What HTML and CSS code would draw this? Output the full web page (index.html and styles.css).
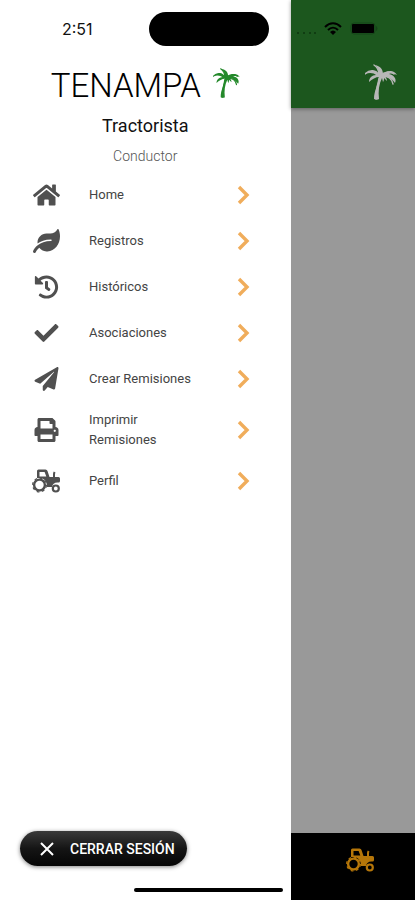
FILE: index.html
```html
<!DOCTYPE html>
<html lang="es">
<head>
    <meta charset="UTF-8">
    <meta name="viewport" content="width=device-width, initial-scale=1.0">
    <title>Tenampa</title>
    <link rel="stylesheet" href="styles.css">
</head>
<body>
    <!-- Shared icons -->
    <svg class="sprite" aria-hidden="true">
        <symbol id="chevron" viewBox="0 0 14 20">
            <path d="M2 2l8 8-8 8" fill="none" stroke="currentColor" stroke-width="3.4"/>
        </symbol>
        <symbol id="palm" viewBox="0 0 32 36">
            <path d="M14 11C11 6 5 5 0 10c5-2 9-1 11 1-4 0-7 3-7 7 3-3 7-5 10-5-1 8-5 14-5 22 2 1 4 1 5 0-1-8 0-15 3-21l1 4c1-1 1-3 1-4l3 3c0-2-1-3-2-5 4 1 7 3 10 7 2-4-1-8-6-9 3-1 6 0 8 1-3-5-9-5-14-1 0-5-3-8-8-9 3 3 4 6 4 10z"/>
            <path d="M14 11C11 6 5 5 0 10M14 11c0-5-2-8-5-10M15 12c5-5 11-5 14-2M17 12c6 0 10 3 11 8M14 14c-1 7-4 14-3 21" fill="none" stroke="currentColor" stroke-width="1.4" stroke-linecap="round"/>
        </symbol>
        <symbol id="tractor" viewBox="0 0 29 24">
            <path fill-rule="evenodd" d="M5 9V2q0-1.500 1.500-1.500h7q1.500 0 2 1.500l2 6h3.500V5q0-1.500.8-2.500l1.700 1Q23 4.500 23 5.500V8h3.500Q28 8 28 9.500V12q0 1.500-1.500 1.500h-1a5.500 5.500 0 0 0-5.500 4.500h-5q0-9-8-9zM7.500 3v4.500h6.800L12.600 3z"/>
            <circle cx="7.500" cy="16" r="5.400" fill="none" stroke="currentColor" stroke-width="2.400"/>
            <circle cx="7.500" cy="16" r="6.900" fill="none" stroke="currentColor" stroke-width="1.200" stroke-dasharray="2.710 2.710"/>
            <circle cx="23.800" cy="19.500" r="3" fill="none" stroke="currentColor" stroke-width="2.200"/>
        </symbol>
    </svg>

    <div class="app">
        <aside class="drawer">
            <div class="status-bar">
                <span class="time">2:51</span>
                <span class="island"></span>
            </div>

            <header class="profile">
                <h1>TENAMPA <svg class="brand-palm" viewBox="0 0 32 36"><use href="#palm"/></svg></h1>
                <h2>Tractorista</h2>
                <p>Conductor</p>
            </header>

            <nav class="menu">
                <a href="#home">
                    <svg class="icon" viewBox="0 0 576 512"><path d="M280.37 148.26L96 300.11V464a16 16 0 0 0 16 16l112.06-.29a16 16 0 0 0 15.92-16V368a16 16 0 0 1 16-16h64a16 16 0 0 1 16 16v95.64a16 16 0 0 0 16 16.05L464 480a16 16 0 0 0 16-16V300L295.67 148.26a12.19 12.19 0 0 0-15.3 0zM571.6 251.47L488 182.56V44.05a12 12 0 0 0-12-12h-56a12 12 0 0 0-12 12v72.61L318.47 43a48 48 0 0 0-61 0L4.34 251.47a12 12 0 0 0-1.6 16.9l25.5 31A12 12 0 0 0 45.15 301l235.22-193.74a12.19 12.19 0 0 1 15.3 0L530.9 301a12 12 0 0 0 16.9-1.6l25.5-31a12 12 0 0 0-1.7-16.93z"/></svg>
                    <span>Home</span>
                    <svg class="chevron"><use href="#chevron"/></svg>
                </a>
                <a href="#registros">
                    <svg class="icon" viewBox="0 0 576 512"><path d="M546.2 9.7c-5.6-12.5-21.6-13-28.3-1.2C486.9 62.4 431.4 96 368 96h-80C182 96 96 182 96 288c0 7 .8 13.7 1.5 20.5C161.3 262.8 253.4 224 384 224c8.8 0 16 7.2 16 16s-7.2 16-16 16C132.6 256 26 410.1 2.4 468c-6.6 16.3 1.2 34.9 17.5 41.6 16.4 6.8 35-1.1 41.8-17.3 1.5-3.6 20.9-47.9 71.9-90.6 32.4 43.9 94 85.8 174.9 77.2C465.5 467.5 576 326.7 576 154.3c0-50.2-10.8-102.2-29.8-144.6z"/></svg>
                    <span>Registros</span>
                    <svg class="chevron"><use href="#chevron"/></svg>
                </a>
                <a href="#historicos">
                    <svg class="icon" viewBox="0 0 512 512"><path d="M504 255.531c.253 136.64-111.18 248.372-247.82 248.468-59.015.042-113.223-20.53-155.822-54.911-11.077-8.94-11.905-25.541-1.839-35.607l11.267-11.267c8.609-8.609 22.353-9.551 31.891-1.984C173.062 425.135 212.781 440 256 440c101.705 0 184-82.311 184-184 0-101.705-82.311-184-184-184-48.814 0-93.149 18.969-126.068 49.932l50.754 50.754c10.08 10.08 2.941 27.314-11.313 27.314H24c-8.837 0-16-7.163-16-16V38.627c0-14.254 17.234-21.393 27.314-11.314l49.372 49.372C129.209 34.136 189.552 8 256 8c136.81 0 247.747 110.78 248 247.531zm-180.912 78.784l9.823-12.63c8.138-10.463 6.253-25.542-4.21-33.679L288 256.349V152c0-13.255-10.745-24-24-24h-16c-13.255 0-24 10.745-24 24v135.651l65.409 50.874c10.463 8.137 25.541 6.253 33.679-4.21z"/></svg>
                    <span>Históricos</span>
                    <svg class="chevron"><use href="#chevron"/></svg>
                </a>
                <a href="#asociaciones">
                    <svg class="icon" viewBox="0 0 512 512"><path d="M173.898 439.404l-166.4-166.4c-9.997-9.997-9.997-26.206 0-36.204l36.203-36.204c9.997-9.998 26.207-9.998 36.204 0L192 312.69 432.095 72.596c9.997-9.997 26.207-9.997 36.204 0l36.203 36.204c9.997 9.997 9.997 26.206 0 36.204l-294.4 294.401c-9.998 9.997-26.207 9.997-36.204-.001z"/></svg>
                    <span>Asociaciones</span>
                    <svg class="chevron"><use href="#chevron"/></svg>
                </a>
                <a href="#crear">
                    <svg class="icon" viewBox="0 0 512 512"><path d="M476 3.2L12.5 270.6c-18.1 10.4-15.8 35.6 2.2 43.2L121 358.4l287.3-253.2c5.5-4.9 13.3 2.6 8.6 8.3L176 407v80.5c0 23.6 28.5 32.9 42.5 15.8L282 426l124.6 52.2c14.2 6 30.4-2.9 33-18.2l72-432C515 7.8 493.3-6.8 476 3.2z"/></svg>
                    <span>Crear Remisiones</span>
                    <svg class="chevron"><use href="#chevron"/></svg>
                </a>
                <a href="#imprimir">
                    <svg class="icon" viewBox="0 0 512 512"><path d="M448 192V77.25c0-8.49-3.37-16.62-9.37-22.63L393.37 9.37c-6-6-14.14-9.37-22.63-9.37H96C78.33 0 64 14.33 64 32v160c-35.35 0-64 28.65-64 64v112c0 8.84 7.16 16 16 16h48v96c0 17.67 14.33 32 32 32h320c17.67 0 32-14.33 32-32v-96h48c8.84 0 16-7.16 16-16V256c0-35.35-28.65-64-64-64zm-64 256H128v-96h256v96zm0-224H128V64h192v48c0 8.84 7.16 16 16 16h48v96zm48 72c-13.25 0-24-10.75-24-24 0-13.26 10.75-24 24-24s24 10.74 24 24c0 13.25-10.75 24-24 24z"/></svg>
                    <span>Imprimir<br>Remisiones</span>
                    <svg class="chevron"><use href="#chevron"/></svg>
                </a>
                <a href="#perfil">
                    <svg class="icon" viewBox="0 0 29 24"><use href="#tractor"/></svg>
                    <span>Perfil</span>
                    <svg class="chevron"><use href="#chevron"/></svg>
                </a>
            </nav>

            <button type="button" class="logout">
                <svg viewBox="0 0 14 14"><path d="M1 1l12 12M13 1L1 13" fill="none" stroke="currentColor" stroke-width="2"/></svg>
                CERRAR SESIÓN
            </button>
            <div class="home-indicator"></div>
        </aside>

        <!-- Page behind the open drawer -->
        <main class="page">
            <header class="page-header">
                <div class="signals">
                    <svg class="dots" viewBox="0 0 20 4"><path d="M1 1h2v2H1zM7 1h2v2H7zM13 1h2v2h-2zM18 1h2v2h-2z"/></svg>
                    <svg class="wifi" viewBox="0 0 18 13"><path d="M1 5c5-5 11-5 16 0M4 8c3-3 7-3 10 0" fill="none" stroke="currentColor" stroke-width="2"/><path d="M9 13l-3-3c2-2 4-2 6 0z"/></svg>
                    <svg class="battery" viewBox="0 0 28 13"><rect x="1" y="1" width="24" height="11" rx="3" fill="none" stroke="#154418"/><rect x="2" y="2" width="22" height="9" rx="1"/><path d="M26 4c2 1 2 4 0 5z" fill="#154418"/></svg>
                </div>
                <svg class="header-palm" viewBox="0 0 32 36"><use href="#palm"/></svg>
            </header>
            <div class="content"></div>
            <footer class="tab-bar">
                <a href="#perfil" aria-label="Perfil"><svg viewBox="0 0 29 24"><use href="#tractor"/></svg></a>
            </footer>
        </main>
    </div>
</body>
</html>
```

FILE: styles.css
```css
* { box-sizing: border-box; }
body { margin: 0; font-family: Roboto, sans-serif; color: #111; background: #fff; }
svg { display: block; flex: none; fill: currentColor; }
.sprite { display: none; }
.app { display: flex; min-height: 100vh; }

.drawer { width: 70%; display: flex; flex-direction: column; background: #fff; }
.status-bar { display: flex; align-items: center; justify-content: space-between; height: 58px; padding: 0 22px 0 62px; }
.time { font-family: Inter, sans-serif; font-size: 16px; font-weight: 400; }
.island { width: 120px; height: 34px; border-radius: 17px; background: #000; }

.profile { text-align: center; }
.profile h1 { display: flex; align-items: center; justify-content: center; gap: 12px; margin: 6px 0 0; font-size: 33px; line-height: 44px; font-weight: 300; color: #000; }
.brand-palm { width: 27px; height: 30px; margin-bottom: 6px; color: #24892b; }
.profile h2 { margin: 6px 0 0; font-size: 18px; line-height: 24px; font-weight: 400; }
.profile p { margin: 8px 0 0; font-size: 14px; line-height: 20px; font-weight: 300; color: #555; }

.menu { margin-top: 6px; }
.menu a { display: flex; align-items: center; min-height: 46px; padding: 8px 40px 8px 32px; color: #444; font-size: 13px; line-height: 20px; text-decoration: none; }
.menu span { flex: 1; margin-left: 28px; }
.icon { width: 29px; height: 24px; color: #505050; }
.chevron { width: 14px; height: 20px; color: #f0ad5b; }

.logout { display: flex; align-items: center; align-self: flex-start; gap: 16px; height: 35px; margin: auto 0 0 20px; padding: 0 12px 0 20px; border: 0; border-radius: 18px; background: linear-gradient(#3a3a3a, #151515 50%, #050505); box-shadow: 0 1px 4px rgba(0,0,0,0.5); color: #fff; font: 500 14px Roboto, sans-serif; }
.logout svg { width: 14px; height: 14px; }
.home-indicator { align-self: flex-end; width: 51%; height: 4px; margin: 22px 8px 8px 0; border-radius: 2px; background: #000; }

.page { flex: 1; display: flex; flex-direction: column; background: #999; }
.page-header { height: 108px; background: #1c571e; box-shadow: 0 1px 4px rgba(0,0,0,0.4); }
.signals { display: flex; align-items: center; gap: 8px; height: 56px; padding-left: 5px; color: #000; }
.dots { width: 20px; height: 4px; margin-top: 10px; color: #103d12; }
.wifi { width: 18px; height: 13px; }
.battery { width: 28px; height: 13px; }
.header-palm { width: 32px; height: 36px; margin: 8px 18px 0 auto; color: #b7b7b7; }
.content { flex: 1; }
.tab-bar { height: 67px; padding: 15px 40px 0 0; background: #000; }
.tab-bar svg { width: 29px; height: 24px; margin-left: auto; color: #b57609; }
```
